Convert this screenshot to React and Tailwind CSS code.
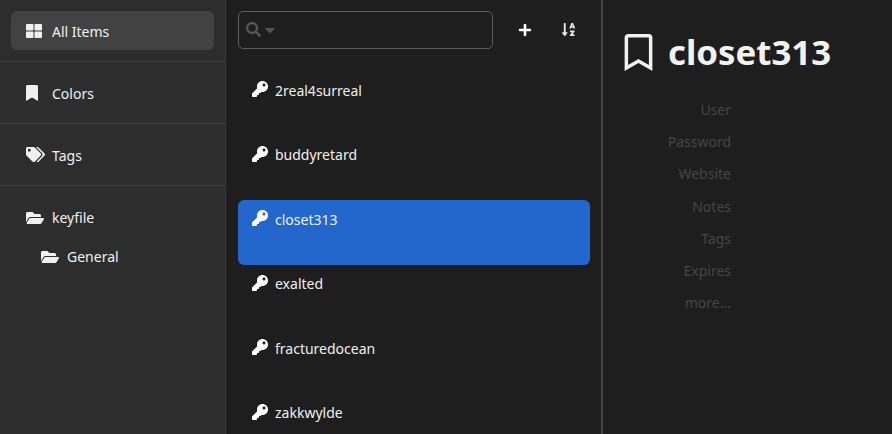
import React from 'react';
import { FaThLarge, FaBookmark, FaRegBookmark, FaTags, FaFolderOpen, FaKey, FaSearch, FaCaretDown, FaPlus, FaSortAlphaDown } from 'react-icons/fa';

const entries = ['2real4surreal', 'buddyretard', 'closet313', 'exalted', 'fracturedocean', 'zakkwylde'];
const fields = ['User', 'Password', 'Website', 'Notes', 'Tags', 'Expires', 'more...'];

export default function App() {
    return (
        <div className="flex w-[892px] h-[434px] overflow-hidden bg-[#1e1e1e] text-[14px] text-white font-['Noto_Sans',sans-serif]">
            {/* Menu */}
            <div className="w-[226px] shrink-0 bg-[#2d2d2d] border-r border-[#3a3a3a] flex flex-col">
                <div className="h-[62px] border-b border-[#3e3e3e] px-[11px] pt-[11px]">
                    <div className="h-[39px] rounded-md bg-[#424242] flex items-center pl-[15px] gap-[10px] text-[#f0f0f0]">
                        <FaThLarge size={16} />
                        <span className="pt-[2px]">All Items</span>
                    </div>
                </div>
                <div className="h-[62px] border-b border-[#3e3e3e] flex items-center pl-[24px] gap-[12px] text-[#f0f0f0]">
                    <FaBookmark size={16} className="shrink-0" />
                    <span className="pt-[2px]">Colors</span>
                </div>
                <div className="h-[62px] border-b border-[#3e3e3e] flex items-center pl-[26px] gap-[7px] text-[#f0f0f0]">
                    <FaTags size={19} className="shrink-0" />
                    <span className="pt-[2px]">Tags</span>
                </div>
                <div className="flex items-center pl-[26px] gap-[8px] mt-[21px] h-[21px] text-[#f0f0f0]">
                    <FaFolderOpen size={18} />
                    <span>keyfile</span>
                </div>
                <div className="flex items-center pl-[41px] gap-[8px] mt-[18px] h-[21px] text-[#f0f0f0]">
                    <FaFolderOpen size={18} />
                    <span>General</span>
                </div>
            </div>

            {/* List */}
            <div className="w-[375px] shrink-0 flex flex-col">
                <div className="flex items-center h-[71px] pl-[12px] pb-[12px] shrink-0">
                    <div className="w-[255px] h-[38px] rounded-[5px] border border-[#5c5c5c] flex items-center pl-[7px] gap-[1px] text-[#555]">
                        <FaSearch size={15} />
                        <FaCaretDown size={16} />
                    </div>
                    <FaPlus size={14} className="ml-[25px] text-white" />
                    <FaSortAlphaDown size={15} className="ml-[29px] text-[#e8e8e8]" />
                </div>
                <div className="flex flex-col pl-[12px] pr-[11px]">
                    {entries.map(name => (
                        <div
                            key={name}
                            className={`h-[64.5px] shrink-0 rounded-md flex items-start gap-[7px] pl-[14px] pt-[9px] text-[#f0f0f0] ${name === 'closet313' ? 'bg-[#2366cc]' : ''}`}
                        >
                            <FaKey size={16} className="shrink-0 mt-[1px] text-white" />
                            <span className="leading-[20px] pt-[0.5px]">{name}</span>
                        </div>
                    ))}
                </div>
            </div>

            {/* Details */}
            <div className="flex-1 border-l-2 border-[#444444] pl-[17px] pt-[30px]">
                <div className="flex items-center gap-[11px] h-[44px]">
                    <FaRegBookmark size={37} className="text-[#f2f2f2] shrink-0" />
                    <span className="text-[34.8px] font-bold text-[#f2f2f2] leading-none">closet313</span>
                </div>
                <div className="flex flex-col w-[111px] mt-[25px] gap-[11.2px] text-right text-[#454545]">
                    {fields.map(label => (
                        <div key={label} className="h-[21px] leading-[21px]">{label}</div>
                    ))}
                </div>
            </div>
        </div>
    );
}
